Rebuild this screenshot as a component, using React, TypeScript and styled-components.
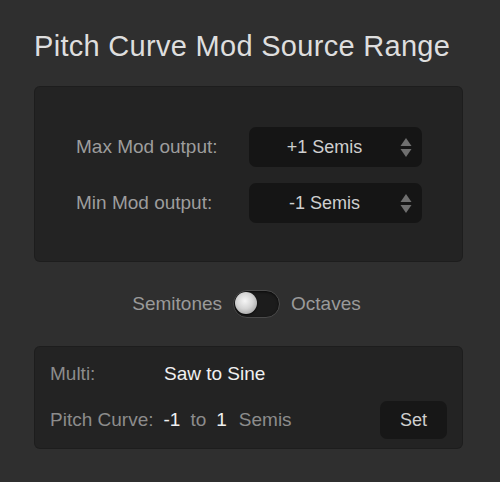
import React, { useState } from "react";
import styled, { createGlobalStyle } from "styled-components";

const Global = createGlobalStyle`
  html, body { margin: 0; padding: 0; background: #2f2f2f; }
  body { font-family: "Liberation Sans", Arial, sans-serif; }
`;

const Page = styled.div`
  width: 500px;
  height: 482px;
  box-sizing: border-box;
  background: #2f2f2f;
  padding: 29px 37px 0 34px;
  display: flex;
  flex-direction: column;
`;

const Title = styled.h1`
  margin: 0;
  font-weight: 400;
  font-size: 29px;
  line-height: 34px;
  color: #dedede;
  letter-spacing: 0.3px;
`;

const Panel = styled.div<{ $h: number; $mt: number }>`
  margin-top: ${(p) => p.$mt}px;
  height: ${(p) => p.$h}px;
  box-sizing: border-box;
  background: #232323;
  border-radius: 6px;
  box-shadow: inset 0 0 0 1px rgba(0, 0, 0, 0.15);
`;

const RangeGrid = styled.div`
  display: grid;
  grid-template-columns: 173px 173px;
  row-gap: 16px;
  padding: 41px 0 0 42px;
  align-items: center;
`;

const Label = styled.span`
  font-size: 19px;
  color: #9d9d9d;
`;

const Select = styled.div`
  position: relative;
  height: 40px;
  background: #151515;
  border-radius: 7px;
  display: flex;
  align-items: center;
  justify-content: center;
  padding-right: 22px;
  font-size: 18px;
  color: #cfcfcf;
`;

const Arrows = styled.svg`
  position: absolute;
  right: 10px;
  top: 10px;
`;

const ToggleRow = styled.div`
  margin-top: 28px;
  display: flex;
  align-items: center;
  justify-content: center;
  gap: 11px;
  padding-right: 4px;
`;

const ToggleLabel = styled.span`
  font-size: 19px;
  color: #9a9a9a;
`;

const Track = styled.div`
  position: relative;
  width: 47px;
  height: 28px;
  box-sizing: border-box;
  border-radius: 14px;
  background: #1c1c1c;
  border: 1px solid #4a4a4a;
  box-shadow: inset 0 1px 3px rgba(0, 0, 0, 0.7);
`;

const Knob = styled.div`
  position: absolute;
  left: 1px;
  top: 1px;
  width: 22px;
  height: 22px;
  border-radius: 50%;
  background: radial-gradient(circle at 45% 40%, #f6f6f6 0%, #d4d4d4 45%, #8d8d8d 100%);
  box-shadow: 0 1px 2px rgba(0, 0, 0, 0.8);
`;

const InfoPanel = styled(Panel)`
  padding: 17px 16px 0 16px;
  display: flex;
  flex-direction: column;
`;

const InfoRow = styled.div<{ $mt: number }>`
  display: flex;
  align-items: center;
  margin-top: ${(p) => p.$mt}px;
`;

const InfoLabel = styled.span<{ $w?: number }>`
  font-size: 19px;
  color: #8c8c8c;
  ${(p) => (p.$w ? `width: ${p.$w}px;` : "")}
`;

const Value = styled.span<{ $ml?: number; $muted?: boolean }>`
  font-size: 19px;
  margin-left: ${(p) => p.$ml ?? 0}px;
  color: ${(p) => (p.$muted ? "#8c8c8c" : "#f0f0f0")};
`;

const SetButton = styled.button`
  margin-left: auto;
  width: 67px;
  height: 38px;
  border: none;
  border-radius: 7px;
  background: #171717;
  color: #cfcfcf;
  font-family: inherit;
  font-size: 18px;
  padding: 0;
`;

const UpDown = () => (
  <Arrows width="12" height="20" viewBox="0 0 12 20">
    <polygon points="6,1 11.5,9 0.5,9" fill="#6f6f6f" />
    <polygon points="0.5,12 11.5,12 6,20" fill="#6f6f6f" />
  </Arrows>
);

export default function App() {
  const [oct, setOct] = useState(false);
  return (
    <>
      <Global />
      <Page>
        <Title>Pitch Curve Mod Source Range</Title>
        <Panel $h={176} $mt={23}>
          <RangeGrid>
            <Label>Max Mod output:</Label>
            <Select>
              +1 Semis
              <UpDown />
            </Select>
            <Label>Min Mod output:</Label>
            <Select>
              -1 Semis
              <UpDown />
            </Select>
          </RangeGrid>
        </Panel>
        <ToggleRow>
          <ToggleLabel>Semitones</ToggleLabel>
          <Track onClick={() => setOct(!oct)}>
            <Knob />
          </Track>
          <ToggleLabel>Octaves</ToggleLabel>
        </ToggleRow>
        <InfoPanel $h={103} $mt={28}>
          <InfoRow $mt={0}>
            <InfoLabel $w={114}>Multi:</InfoLabel>
            <Value>Saw to Sine</Value>
          </InfoRow>
          <InfoRow $mt={16}>
            <InfoLabel>Pitch Curve:</InfoLabel>
            <Value $ml={10}>-1</Value>
            <Value $ml={10} $muted>to</Value>
            <Value $ml={10}>1</Value>
            <Value $ml={12} $muted>Semis</Value>
            <SetButton>Set</SetButton>
          </InfoRow>
        </InfoPanel>
      </Page>
    </>
  );
}
